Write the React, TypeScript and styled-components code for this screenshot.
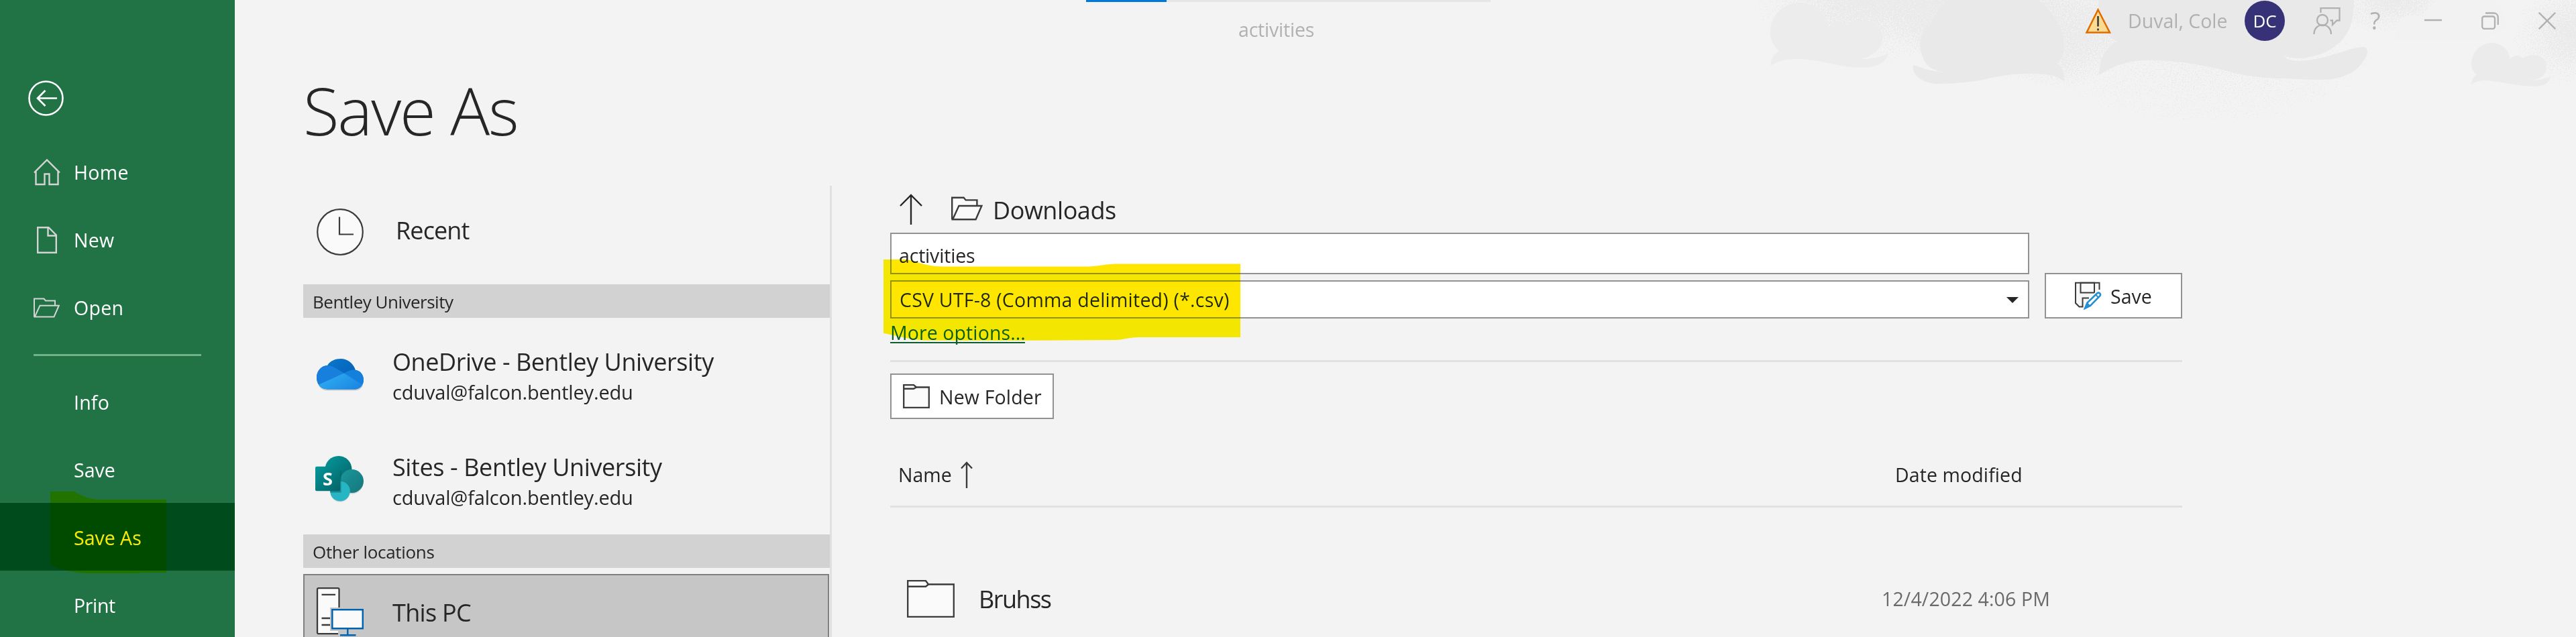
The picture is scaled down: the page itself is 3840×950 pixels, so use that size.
import React from 'react';
import styled, { createGlobalStyle } from 'styled-components';

const GlobalStyle = createGlobalStyle`
  * { box-sizing: border-box; }
  body { margin: 0; background: #f3f3f3; }
`;

const Window = styled.div`
  position: relative;
  isolation: isolate;
  display: flex;
  width: 3840px;
  height: 950px;
  overflow: hidden;
  background: #f3f3f3;
  color: #262626;
  font-family: 'Open Sans', 'Noto Sans', sans-serif;
  font-size: 28.5px;
`;

const Text = styled.span<{ $size?: number; $spacing?: number; $line?: number }>`
  font-size: ${(p) => p.$size ?? 28.5}px;
  letter-spacing: ${(p) => p.$spacing ?? 0}px;
  line-height: ${(p) => p.$line ?? 40}px;
  white-space: pre;
`;

/* ---------- sidebar ---------- */

const Sidebar = styled.nav`
  flex: none;
  width: 350px;
  height: 950px;
  overflow: hidden;
  background: #217346;
  color: #fff;
`;

const BackButton = styled.div`
  height: 205px;
  padding: 120px 0 0 42px;
  svg { display: block; }
`;

const NavItem = styled.div<{ $active?: boolean }>`
  display: grid;
  grid-template-columns: 40px 1fr;
  column-gap: 20px;
  align-items: center;
  height: 101px;
  padding: 2px 0 0 50px;
  background: ${(p) => (p.$active ? '#004b1c' : 'transparent')};
  svg { display: block; }
`;

const NavRule = styled.div`
  width: 250px;
  height: 3px;
  margin: 20px 0 17px 50px;
  background: #6fb388;
`;

/* ---------- title bar ---------- */

const Main = styled.main`
  position: relative;
  flex: 1;
  min-width: 0;
`;

const Doodles = styled.svg`
  position: absolute;
  top: 0;
  right: 0;
`;

const TitleBar = styled.header`
  position: relative;
  display: flex;
  height: 114px;
  padding-left: 1269px;
  color: #b1b1b1;
`;

const DocumentTitle = styled.div`
  display: flex;
  flex-direction: column;
  width: 603px;
  margin-right: 886px;
`;

const ProgressTrack = styled.div`
  height: 3px;
  margin-bottom: 21px;
  background: #e6e6e6;
`;

const ProgressValue = styled.div`
  width: 120px;
  height: 3px;
  background: #0078d7;
`;

const FileName = styled(Text)`
  padding-left: 227px;
`;

const Account = styled.div`
  display: grid;
  grid-template-columns: 64px 174px 102px 85px 81px 85px 85px 56px;
  align-items: center;
  height: 62px;
  svg { display: block; }
`;

const Avatar = styled.div`
  display: flex;
  align-items: center;
  justify-content: center;
  width: 60px;
  height: 60px;
  border-radius: 50%;
  background: #373277;
  color: #fff;
`;

/* ---------- page ---------- */

const Page = styled.div`
  position: relative;
  padding-left: 102px;
`;

const Heading = styled.h1`
  margin: 0 0 63px;
  height: 100px;
  font-size: 98px;
  font-weight: 300;
  line-height: 101px;
  letter-spacing: -2.1px;
`;

const Columns = styled.div`
  display: flex;
  height: 673px;
`;

const Places = styled.section`
  flex: none;
  width: 788px;
  border-right: 3px solid #e0e0e0;
  overflow: hidden;
`;

const RecentRow = styled.div`
  display: flex;
  align-items: center;
  gap: 48px;
  height: 147px;
  padding: 0 0 9px 20px;
  svg { display: block; }
  span { padding-bottom: 4px; }
`;

const GroupBand = styled.div`
  display: flex;
  align-items: center;
  height: 50px;
  padding: 2px 0 0 14px;
  background: #d2d2d2;
`;

const Group = styled.div`
  padding-bottom: 9px;
`;

const Place = styled.div`
  display: flex;
  gap: 43px;
  height: 157px;
  padding: 49px 0 0 18px;
  svg { display: block; flex: none; overflow: visible; }
`;

const PlaceText = styled.div`
  display: flex;
  flex-direction: column;
  margin-top: -6px;
`;

const SelectedPlace = styled.div`
  display: flex;
  gap: 43px;
  width: 784px;
  height: 110px;
  margin-top: 9px;
  padding: 12px 0 0 16px;
  border: 2px solid #808080;
  background: #c6c6c6;
  svg { display: block; flex: none; }
  span { padding-top: 24px; }
`;

const Browser = styled.section`
  width: 1926px;
  margin-left: 87px;
`;

const PathRow = styled.div`
  display: flex;
  align-items: center;
  height: 70px;
  padding-left: 14px;
  svg { display: block; }
  span { padding-top: 3px; }
`;

const UpButton = styled.div`
  width: 77px;
`;

const FolderButton = styled.div`
  width: 62px;
  padding-bottom: 3px;
`;

const SaveForm = styled.div`
  display: flex;
  align-items: flex-end;
  gap: 23px;
`;

const Fields = styled.div`
  display: flex;
  flex-direction: column;
  gap: 9px;
  width: 1698px;
`;

const NameField = styled.div`
  display: flex;
  align-items: center;
  height: 62px;
  padding: 5px 0 0 11px;
  border: 2px solid #929292;
  background: #fff;
`;

const TypeField = styled.div`
  display: flex;
  align-items: center;
  justify-content: space-between;
  height: 57px;
  padding: 1px 14px 0 12px;
  border: 2px solid #929292;
  background: #fff;
`;

const Button = styled.button<{ $width: number; $left: number; $gap: number }>`
  display: flex;
  align-items: center;
  gap: ${(p) => p.$gap}px;
  width: ${(p) => p.$width}px;
  height: 68px;
  padding: 0 0 0 ${(p) => p.$left}px;
  border: 2px solid #929292;
  background: #fff;
  color: inherit;
  font-family: inherit;
  svg { display: block; flex: none; }
  span { padding-top: 2px; }
`;

const MoreOptions = styled.a`
  display: block;
  width: 201px;
  height: 37px;
  padding-top: 7px;
  border-bottom: 2px solid #0e5c2f;
  color: #0e5c2f;
  line-height: 29px;
`;

const Rule = styled.div<{ $top?: number; $bottom?: number }>`
  height: 3px;
  margin: ${(p) => p.$top ?? 0}px 0 ${(p) => p.$bottom ?? 0}px;
  background: #e1e1e1;
`;

const ListHeader = styled.div`
  display: grid;
  grid-template-columns: 1498px 1fr;
  align-items: center;
  height: 89px;
  margin-top: 40px;
  padding-bottom: 3px;
`;

const NameHeader = styled.div`
  display: flex;
  align-items: center;
  gap: 13px;
  padding-left: 12px;
  svg { display: block; }
`;

const FileRow = styled.div`
  display: grid;
  grid-template-columns: 1478px 1fr;
  align-items: center;
  height: 138px;
  margin-top: 55px;
  padding-top: 23px;
`;

const FileCell = styled.div`
  display: flex;
  align-items: center;
  gap: 36px;
  padding-left: 25px;
  svg { display: block; }
  span { padding-top: 2px; }
`;

const DateCell = styled(Text)`
  color: #6a6a6a;
`;

const Marker = styled.svg`
  position: absolute;
  left: 0;
  top: 0;
  pointer-events: none;
  mix-blend-mode: darken;
`;

/* ---------- icons ---------- */

const INK = '#3b3b3b';

const BackIcon = () => (
  <svg width="53" height="53" fill="none" stroke="#fff" strokeWidth="2.6">
    <circle cx="26.5" cy="26.5" r="25" />
    <path d="M43 26.5H14M25.5 15L14 26.5L25.5 38" />
  </svg>
);

const HomeIcon = () => (
  <svg width="40" height="40" viewBox="50 236 40 40" fill="none" stroke="#d4d4d4" strokeWidth="2.4">
    <path d="M51 256.500L70 237.500L89 256.500M53.500 254V274H66.500V258.500H73.500V274H86.500V254" />
  </svg>
);

const NewIcon = () => (
  <svg width="40" height="40" fill="none" stroke="#d4d4d4" strokeWidth="2.4">
    <path d="M6.200 1.200H22.500L33.800 12.500V38.800H6.200ZM21.500 1.200V13.500H33.800" />
  </svg>
);

const OpenIcon = ({ color, fill = 'none', width }: { color: string; fill?: string; width: number }) => (
  <svg width={width} height={(width * 30) / 40} viewBox="0 0 40 30" fill={fill} stroke={color} strokeWidth="2">
    <path d="M1 28.500V1.500H15.500L18 4.500H32V11.500M1.800 28.500L9.500 11.700H37.800L30.500 28.500Z" />
  </svg>
);

const FolderIcon = ({ width, height, tab, drop }: { width: number; height: number; tab: number; drop: number }) => (
  <svg width={width} height={height} fill="#fafafa" stroke={INK} strokeWidth="2.3">
    <path d={`M1.200 1.200H${tab}L${tab + 4} ${drop}H${width - 1.2}V${height - 1.2}H1.200Z`} />
    <path fill="none" d={`M1.200 ${drop * 1.5}H${tab}L${tab + 4} ${drop}`} />
  </svg>
);

const WarningIcon = () => (
  <svg width="40" height="40">
    <path d="M19.500 3.500L37 37.500H2.500Z" fill="#fbdb91" stroke="#e06c00" strokeWidth="2.500" />
    <path d="M19.500 13V28.500M19.500 31.500V34.500" stroke="#454545" strokeWidth="2.800" />
  </svg>
);

const FeedbackIcon = () => (
  <svg width="42" height="42" fill="none" stroke="#b1b1b1" strokeWidth="2.300">
    <circle cx="14" cy="20" r="8" />
    <path d="M1.500 41C1.500 22.500 27 22.500 27 41M11.500 9V2.200H39.500V20.500H35.500L29 27V20.500H25.500" />
  </svg>
);

const ClockIcon = () => (
  <svg width="70" height="70" stroke={INK} strokeWidth="2.200">
    <circle cx="35" cy="35" r="33.800" fill="#fafafa" />
    <path d="M34 12.500V38.500H55" fill="none" />
  </svg>
);

const OneDriveIcon = () => (
  <svg width="72" height="70">
    <defs>
      <linearGradient id="odTop" x1="0" y1="0" x2="1" y2="1">
        <stop offset="0" stopColor="#0a80d4" />
        <stop offset="1" stopColor="#0357ac" />
      </linearGradient>
      <linearGradient id="odLow" x1="0" y1="0" x2="1" y2="0.600">
        <stop offset="0" stopColor="#32b4f4" />
        <stop offset="1" stopColor="#1c88e4" />
      </linearGradient>
      <clipPath id="odCloud">
        <path d="M18 57.500C7 57.500 2 48.500 2 40C2 30 9 22.500 18 22C22 15 30 12 38 12C48 12 57 19 60 29C67 29.500 72 36 72 43.500C72 51 67 57.500 59 57.500Z" />
      </clipPath>
    </defs>
    <path d="M18 59.500H59C65 59.500 69 56 71 52H5C7 56 12 59.500 18 59.500Z" fill="#c9ccd0" />
    <g clipPath="url(#odCloud)">
      <rect width="72" height="60" fill="url(#odTop)" />
      <path d="M0 60V22H18C24 22 29 25 43 33.500L0 53Z" fill="#197fdc" />
      <path d="M43 33.500C50 29 55 28.500 60 28.500H72V54Z" fill="#1480dc" />
      <path d="M2 52L43 33.500L70 51V60H2Z" fill="url(#odLow)" />
    </g>
  </svg>
);

const SharePointIcon = () => (
  <svg width="72" height="70">
    <defs>
      <linearGradient id="spBox" x1="0" y1="0" x2="1" y2="1">
        <stop offset="0" stopColor="#05979a" />
        <stop offset="1" stopColor="#056468" />
      </linearGradient>
      <linearGradient id="spMid" x1="0" y1="0" x2="1" y2="1">
        <stop offset="0" stopColor="#1b989d" />
        <stop offset="1" stopColor="#14767a" />
      </linearGradient>
    </defs>
    <circle cx="54.500" cy="39.500" r="17" fill="#c4cccc" />
    <circle cx="37" cy="54" r="14.500" fill="#c4cccc" />
    <circle cx="34.500" cy="20" r="20" fill="url(#spBox)" />
    <circle cx="54.500" cy="37.500" r="17.500" fill="url(#spMid)" />
    <circle cx="37" cy="52.500" r="14.800" fill="#26b5c2" />
    <path d="M22 53H37V22" fill="none" stroke="#07595c" strokeOpacity="0.500" strokeWidth="3" />
    <rect y="15.700" width="37" height="36.500" rx="2" fill="url(#spBox)" />
    <text x="18.500" y="43.500" textAnchor="middle" fill="#fff" fontSize="27" fontWeight="700">S</text>
  </svg>
);

const ComputerIcon = () => (
  <svg width="72" height="80">
    <rect x="3" y="7.200" width="32.500" height="68" rx="2" fill="#fafafa" stroke={INK} strokeWidth="2.300" />
    <path d="M9.500 16.800H30M9.500 52H26M9.500 62H26" stroke={INK} strokeWidth="2.300" />
    <path d="M22 36H72V71H60V80H34V71H22Z" fill="#c6c6c6" />
    <path d="M25.300 39.300H70.800V67.200H25.300Z" fill="#fafafa" stroke="#0063b1" strokeWidth="2.500" />
    <path d="M48.300 67V77M37 77.300H60.500" stroke="#0063b1" strokeWidth="2.400" />
  </svg>
);

const SaveIcon = () => (
  <svg width="42" height="42" fill="none" strokeWidth="2">
    <path d="M2 1.800H37V14L14 37.500H7.500L2 32Z" fill="#f6f6f6" />
    <path d="M9.500 1.800H30V16.500H9.500Z" fill="#fafafa" stroke={INK} />
    <path d="M37.500 12V1.800H2V32L7.500 37.500H12.500V24.500H22" stroke={INK} />
    <path d="M16.500 39L20 31L34 17C37.500 14.500 41 18 38.500 21.500L24.500 35.500Z" fill="#fff" stroke="#fff" strokeWidth="5" />
    <path d="M17 38.700L20 31L34 17.500C37 15 40.500 18.500 38.200 21.500L24.500 35.500Z" fill="#fff" stroke="#2490d3" strokeWidth="2.600" />
    <path d="M15.500 40.500L19 32L23.500 36.500ZM32 19.500L36 23.500" fill="#2490d3" stroke="#2490d3" />
  </svg>
);

const HeaderDoodles = () => (
  <Doodles width="1300" height="178" viewBox="2540 0 1300 178">
    <defs>
      <filter id="grain" x="0" y="0" width="1" height="1" colorInterpolationFilters="sRGB">
        <feTurbulence type="fractalNoise" baseFrequency="0.600" numOctaves="2" seed="4" result="n" />
        <feColorMatrix in="n" type="matrix" values="0 0 0 0 0  0 0 0 0 0  0 0 0 0 0  1 0 0 0 0" result="a" />
        <feComposite in="a" in2="SourceAlpha" operator="arithmetic" k1="0" k2="1" k3="1" k4="-1" />
        <feComponentTransfer result="t"><feFuncA type="linear" slope="9" /></feComponentTransfer>
        <feFlood floodColor="#eaeaea" />
        <feComposite in2="t" operator="in" />
      </filter>
      <radialGradient id="puff">
        <stop offset="0" stopOpacity="0.750" />
        <stop offset="0.400" stopOpacity="0.560" />
        <stop offset="0.750" stopOpacity="0.360" />
        <stop offset="1" stopOpacity="0" />
      </radialGradient>
      <radialGradient id="haze">
        <stop offset="0" stopOpacity="0.500" />
        <stop offset="0.700" stopOpacity="0.360" />
        <stop offset="1" stopOpacity="0" />
      </radialGradient>
    </defs>
    <g filter="url(#grain)">
      <rect x="2540" width="1300" height="178" fillOpacity="0" />
      <ellipse cx="2780" cy="0" rx="210" ry="120" fill="url(#puff)" />
      <ellipse cx="3010" cy="0" rx="200" ry="150" fill="url(#puff)" />
      <ellipse cx="3290" cy="90" rx="310" ry="125" fill="url(#haze)" />
      <ellipse cx="3570" cy="0" rx="110" ry="60" fill="url(#puff)" />
      <ellipse cx="3840" cy="50" rx="120" ry="100" fill="url(#puff)" />
    </g>
    <path fill="#f2f2f2" d="M3570 60C3570 20 3600 15 3612 30C3620 5 3635 -8 3680 -8C3720 -8 3733 10 3736 40L3700 60Z" />
    <path fill="#ececec" d="M2639 98C2640 88 2644 80 2652 76C2642 68 2638 55 2639 45C2641 20 2660 4 2684 4C2710 5 2722 22 2727 41C2735 29 2748 30 2753 38C2765 28 2795 27 2802 42C2812 58 2804 75 2786 84C2778 88 2770 89 2762 87C2776 91 2800 86 2815 80C2812 92 2800 101 2775 101C2740 100 2715 89 2680 88C2660 88 2650 91 2639 98Z" />
    <path fill="#e9e9e9" d="M3077 121C3065 112 3050 110 3035 110C2990 109 2975 115 2945 121C2920 124 2900 125 2885 125C2865 123 2849 112 2852 97C2862 99 2868 105 2900 108C2884 106 2876 100 2874 98C2858 80 2858 45 2877 38C2890 10 2900 0 2910 0H3036C3060 10 3080 50 3077 75C3075 85 3070 90 3066 95C3075 100 3077 110 3077 121Z" />
    <path fill="#e9e9e9" d="M3128 0H3509C3509 28 3504 52 3482 68C3465 82 3430 93 3404 83C3412 94 3440 94 3486 79C3505 73 3514 70 3524 70C3532 72 3530 84 3522 92C3516 104 3495 119 3461 119C3430 119 3418 117 3392 117C3370 116 3350 113 3330 109C3300 100 3255 90 3205 90C3170 90 3150 98 3129 112C3130 88 3137 72 3156 62C3140 54 3128 38 3128 0Z" />
    <path fill="#ebebeb" d="M3684 126C3685 118 3687 114 3692 111C3685 106 3684 100 3684 94C3686 76 3698 64 3715 64C3732 65 3740 76 3742 88C3748 81 3756 82 3760 87C3770 80 3790 80 3795 92C3798 104 3794 116 3778 119C3770 120 3766 118 3762 117C3772 122 3790 119 3802 114C3800 124 3792 129 3778 129C3750 128 3720 120 3704 120C3695 120 3690 122 3684 126Z" />
  </Doodles>
);

const App = () => (
  <Window>
    <GlobalStyle />
    <Sidebar>
      <BackButton><BackIcon /></BackButton>
      <NavItem><HomeIcon /><Text $spacing={0.3}>Home</Text></NavItem>
      <NavItem><NewIcon /><Text $spacing={0.3}>New</Text></NavItem>
      <NavItem><OpenIcon color="#d4d4d4" width={40} /><Text $spacing={0.3}>Open</Text></NavItem>
      <NavRule />
      <NavItem><i /><Text $spacing={0.2}>Info</Text></NavItem>
      <NavItem><i /><Text>Save</Text></NavItem>
      <NavItem $active><i /><Text>Save As</Text></NavItem>
      <NavItem><i /><Text $spacing={-0.35}>Print</Text></NavItem>
    </Sidebar>

    <Main>
      <HeaderDoodles />
      <TitleBar>
        <DocumentTitle>
          <ProgressTrack><ProgressValue /></ProgressTrack>
          <FileName $spacing={-0.2}>activities</FileName>
        </DocumentTitle>
        <Account>
          <WarningIcon />
          <Text>Duval, Cole</Text>
          <Avatar><Text $size={26}>DC</Text></Avatar>
          <FeedbackIcon />
          <Text $size={36}>?</Text>
          <svg width="26" height="26" stroke="#b1b1b1" strokeWidth="2.500"><path d="M0 12H26" /></svg>
          <svg width="26" height="26" fill="none" stroke="#b1b1b1" strokeWidth="2.300">
            <rect x="1.200" y="6.500" width="18.800" height="18.300" rx="3" />
            <path d="M6 1.500H18C22 1.500 24.800 4 24.800 8V19" />
          </svg>
          <svg width="26" height="26" stroke="#b1b1b1" strokeWidth="2.300"><path d="M0.800 0.800L25.200 25.200M25.200 0.800L0.800 25.200" /></svg>
        </Account>
      </TitleBar>

      <Page>
        <Heading>Save As</Heading>
        <Columns>
          <Places>
            <RecentRow><ClockIcon /><Text $size={36} $spacing={-0.9}>Recent</Text></RecentRow>
            <Group>
              <GroupBand><Text $size={26} $spacing={-0.5}>Bentley University</Text></GroupBand>
              <Place>
                <OneDriveIcon />
                <PlaceText>
                  <Text $size={36} $spacing={-0.43} $line={46}>OneDrive - Bentley University</Text>
                  <Text $size={29} $spacing={-0.17} $line={43}>cduval@falcon.bentley.edu</Text>
                </PlaceText>
              </Place>
              <Place>
                <SharePointIcon />
                <PlaceText>
                  <Text $size={36} $spacing={-0.39} $line={46}>Sites - Bentley University</Text>
                  <Text $size={29} $spacing={-0.17} $line={43}>cduval@falcon.bentley.edu</Text>
                </PlaceText>
              </Place>
            </Group>
            <GroupBand><Text $size={26} $spacing={-0.32}>Other locations</Text></GroupBand>
            <SelectedPlace>
              <ComputerIcon />
              <Text $size={36} $spacing={-0.69}>This PC</Text>
            </SelectedPlace>
          </Places>

          <Browser>
            <PathRow>
              <UpButton>
                <svg width="34" height="46" fill="none" stroke="#262626" strokeWidth="2.400">
                  <path d="M17 46V2M1 18L17 2L33 18" />
                </svg>
              </UpButton>
              <FolderButton><OpenIcon color={INK} fill="#fafafa" width={48} /></FolderButton>
              <Text $size={36} $spacing={-0.44}>Downloads</Text>
            </PathRow>
            <SaveForm>
              <Fields>
                <NameField><Text $spacing={-0.18}>activities</Text></NameField>
                <TypeField>
                  <Text $spacing={0.22}>CSV UTF-8 (Comma delimited) (*.csv)</Text>
                  <svg width="18" height="9"><path d="M0 0H18L9 9Z" fill="#262626" /></svg>
                </TypeField>
              </Fields>
              <Button $width={205} $left={42} $gap={12}><SaveIcon /><Text>Save</Text></Button>
            </SaveForm>
            <MoreOptions><Text $spacing={0.1} $line={29}>More options...</Text></MoreOptions>
            <Rule $top={25} $bottom={17} />
            <Button $width={244} $left={17} $gap={14}>
              <FolderIcon width={40} height={36} tab={16} drop={4.5} />
              <Text $spacing={0.17}>New Folder</Text>
            </Button>
            <ListHeader>
              <NameHeader>
                <Text>Name</Text>
                <svg width="18" height="40" fill="none" stroke={INK} strokeWidth="2.400">
                  <path d="M9 40V2M1 10.500L9 2L17 10.500" />
                </svg>
              </NameHeader>
              <Text $spacing={0.1}>Date modified</Text>
            </ListHeader>
            <Rule />
            <FileRow>
              <FileCell>
                <FolderIcon width={71} height={56} tab={28} drop={6.5} />
                <Text $size={36} $spacing={-1.5}>Bruhss</Text>
              </FileCell>
              <DateCell $spacing={0.12}>12/4/2022 4:06 PM</DateCell>
            </FileRow>
          </Browser>
        </Columns>
      </Page>
    </Main>

    <Marker width="1860" height="950" fill="#ffe600">
      <path d="M75 733H111C122 740 135 745 148 745H248V854H215L205 855H130C110 854 90 850 75 842Z" />
      <path d="M1317 387H1349C1365 388 1375 397 1405 397.500H1620C1640 397 1645 394 1665 393.500H1849V503H1700C1680 503 1675 507 1662 507L1580 507.500Q1480 508 1380 507.500C1350 506 1335 500 1317 497Z" />
    </Marker>
  </Window>
);

export default App;
